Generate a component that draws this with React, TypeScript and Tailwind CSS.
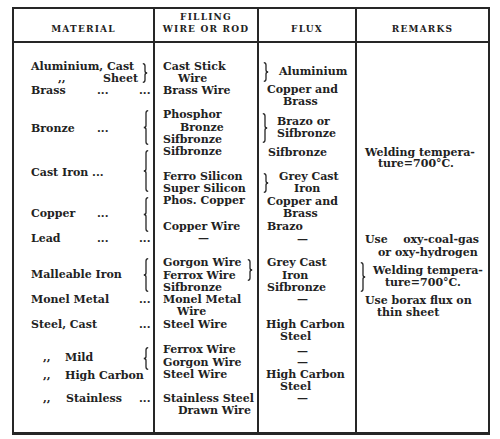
import React from "react";

function Brace({ h, dir }: { h: number; dir: "l" | "r" }) {
  const m = h / 2;
  const d =
    dir === "r"
      ? `M0.8 0.7 Q3 0.7 3 3 L3 ${m - 2} Q3 ${m} 5.2 ${m} Q3 ${m} 3 ${m + 2} L3 ${h - 3} Q3 ${h - 0.7} 0.8 ${h - 0.7}`
      : `M5.2 0.7 Q3 0.7 3 3 L3 ${m - 2} Q3 ${m} 0.8 ${m} Q3 ${m} 3 ${m + 2} L3 ${h - 3} Q3 ${h - 0.7} 5.2 ${h - 0.7}`;
  return (
    <svg width={6} height={h} viewBox={`0 0 6 ${h}`} className="shrink-0">
      <path d={d} fill="none" stroke="#262626" strokeWidth={1.3} />
    </svg>
  );
}

export default function App() {
  return (
    <div className="w-[500px] h-[439px] bg-white pt-[7px] pl-[12px] font-['DejaVu_Serif',serif] font-bold text-[11px] leading-[12px] text-[#222] overflow-hidden">
      <div className="w-[478px] h-[428px] border-2 border-b-[3px] border-[#262626] flex flex-col">
        {/* Header */}
        <div className="flex h-[34px] shrink-0 border-b-2 border-[#262626] text-[9px] tracking-[1.2px]">
          <div className="w-[139px] flex flex-col items-center justify-end pb-[6px]">
            <div>MATERIAL</div>
          </div>
          <div className="w-[104px] border-l-2 border-[#262626] flex flex-col items-center justify-end pb-[6px]">
            <div>FILLING</div>
            <div>WIRE OR ROD</div>
          </div>
          <div className="w-[98px] border-l-2 border-[#262626] flex flex-col items-center justify-end pb-[6px]">
            <div>FLUX</div>
          </div>
          <div className="w-[133px] border-l-2 border-[#262626] flex flex-col items-center justify-end pb-[6px]">
            <div>REMARKS</div>
          </div>
        </div>

        {/* Body */}
        <div className="flex flex-1">
          {/* Material */}
          <div className="w-[139px] flex flex-col pl-[17px]">
            <div className="mt-[18px] h-[24px] flex items-center">
              <div className="flex-1 flex flex-col">
                <div className="whitespace-nowrap">Aluminium, Cast</div>
                <div className="flex justify-between">
                  <span className="pl-[27px]">,,</span>
                  <span>Sheet</span>
                </div>
              </div>
              <div className="w-[15px] flex justify-center pr-[2px]">
                <Brace h={20} dir="r" />
              </div>
            </div>
            <div className="h-[12px] flex">
              <div className="flex-1 flex">
                <span className="w-[66px]">Brass</span>
                <span>...</span>
              </div>
              <div className="w-[15px] pl-[1px]">...</div>
            </div>
            <div className="mt-[12px] h-[36px] flex items-center">
              <div className="flex-1 flex pt-[4px]">
                <span className="w-[66px]">Bronze</span>
                <span>...</span>
              </div>
              <div className="w-[15px] flex justify-center">
                <Brace h={35} dir="l" />
              </div>
            </div>
            <div className="mt-[5px] h-[42px] flex items-center">
              <div className="flex-1 pt-[4px] whitespace-nowrap">Cast Iron ...</div>
              <div className="w-[15px] flex justify-center">
                <Brace h={42} dir="l" />
              </div>
            </div>
            <div className="mt-[4px] h-[36px] flex items-center">
              <div className="flex-1 flex">
                <span className="w-[66px]">Copper</span>
                <span>...</span>
              </div>
              <div className="w-[15px] flex justify-center">
                <Brace h={35} dir="l" />
              </div>
            </div>
            <div className="mt-[1px] h-[12px] flex">
              <div className="flex-1 flex">
                <span className="w-[66px]">Lead</span>
                <span>...</span>
              </div>
              <div className="w-[15px] pl-[1px]">...</div>
            </div>
            <div className="mt-[13px] h-[34px] flex items-center">
              <div className="flex-1 whitespace-nowrap">Malleable Iron</div>
              <div className="w-[15px] flex justify-center">
                <Brace h={34} dir="l" />
              </div>
            </div>
            <div className="mt-[2px] h-[12px] flex">
              <div className="flex-1 whitespace-nowrap">Monel Metal</div>
              <div className="w-[15px] pl-[1px]">...</div>
            </div>
            <div className="mt-[13px] h-[12px] flex">
              <div className="flex-1 whitespace-nowrap">Steel, Cast</div>
              <div className="w-[15px] pl-[1px]">...</div>
            </div>
            <div className="mt-[15px] h-[24px] flex items-center">
              <div className="flex-1 flex">
                <span className="w-[34px] pl-[12px]">,,</span>
                <span>Mild</span>
              </div>
              <div className="w-[15px] flex justify-center">
                <Brace h={23} dir="l" />
              </div>
            </div>
            <div className="h-[12px] flex">
              <div className="flex-1 flex whitespace-nowrap">
                <span className="w-[34px] pl-[12px]">,,</span>
                <span>High Carbon</span>
              </div>
              <div className="w-[15px]"></div>
            </div>
            <div className="mt-[11px] h-[12px] flex">
              <div className="flex-1 flex">
                <span className="w-[35px] pl-[12px]">,,</span>
                <span>Stainless</span>
              </div>
              <div className="w-[15px] pl-[1px]">...</div>
            </div>
          </div>

          {/* Filling */}
          <div className="w-[104px] border-l-2 border-[#262626] flex flex-col pl-[8px] whitespace-nowrap">
            <div className="mt-[18px]">Cast Stick</div>
            <div className="pl-[15px]">Wire</div>
            <div>Brass Wire</div>
            <div className="mt-[12px]">Phosphor</div>
            <div className="mt-[1px] pl-[17px]">Bronze</div>
            <div>Sifbronze</div>
            <div>Sifbronze</div>
            <div className="mt-[13px]">Ferro Silicon</div>
            <div>Super Silicon</div>
            <div>Phos. Copper</div>
            <div className="mt-[14px]">Copper Wire</div>
            <div className="pl-[35px]">—</div>
            <div className="mt-[12px] flex items-center justify-between pr-[4px]">
              <div className="flex flex-col">
                <div>Gorgon Wire</div>
                <div className="mt-[1px]">Ferrox Wire</div>
              </div>
              <Brace h={22} dir="r" />
            </div>
            <div>Sifbronze</div>
            <div>Monel Metal</div>
            <div className="pl-[14px]">Wire</div>
            <div className="mt-[1px]">Steel Wire</div>
            <div className="mt-[13px]">Ferrox Wire</div>
            <div className="mt-[1px]">Gorgon Wire</div>
            <div>Steel Wire</div>
            <div className="mt-[12px]">Stainless Steel</div>
            <div className="pl-[15px]">Drawn Wire</div>
          </div>

          {/* Flux */}
          <div className="w-[98px] border-l-2 border-[#262626] flex flex-col whitespace-nowrap">
            <div className="mt-[19px] h-[20px] flex items-center pl-[4px]">
              <Brace h={20} dir="r" />
              <span className="ml-[10px]">Aluminium</span>
            </div>
            <div className="mt-[2px] pl-[8px]">Copper and</div>
            <div className="pl-[24px]">Brass</div>
            <div className="mt-[5px] h-[30px] flex items-center pl-[3px]">
              <Brace h={30} dir="r" />
              <div className="ml-[9px] flex flex-col">
                <div>Brazo or</div>
                <div>Sifbronze</div>
              </div>
            </div>
            <div className="mt-[4px] pl-[9px]">Sifbronze</div>
            <div className="mt-[12px] h-[24px] flex items-center pl-[4px]">
              <Brace h={20} dir="r" />
              <div className="ml-[10px] flex flex-col">
                <div>Grey Cast</div>
                <div className="pl-[15px]">Iron</div>
              </div>
            </div>
            <div className="mt-[1px] pl-[8px]">Copper and</div>
            <div className="pl-[24px]">Brass</div>
            <div className="mt-[1px] pl-[8px]">Brazo</div>
            <div className="mt-[1px] pl-[38px]">—</div>
            <div className="mt-[11px] pl-[8px]">Grey Cast</div>
            <div className="mt-[1px] pl-[23px]">Iron</div>
            <div className="pl-[8px]">Sifbronze</div>
            <div className="pl-[38px]">—</div>
            <div className="mt-[13px] pl-[7px]">High Carbon</div>
            <div className="pl-[21px]">Steel</div>
            <div className="mt-[3px] pl-[38px] leading-[11px]">—</div>
            <div className="pl-[38px] leading-[11px]">—</div>
            <div className="mt-[1px] pl-[7px]">High Carbon</div>
            <div className="pl-[21px] leading-[11px]">Steel</div>
            <div className="mt-[1px] pl-[38px]">—</div>
          </div>

          {/* Remarks */}
          <div className="w-[133px] border-l-2 border-[#262626] flex flex-col whitespace-nowrap">
            <div className="mt-[104px] pl-[8px] leading-[11px]">Welding tempera-</div>
            <div className="pl-[21px] leading-[11px]">ture=700°C.</div>
            <div className="mt-[65px] flex justify-between pl-[8px] pr-[9px]">
              <span>Use</span>
              <span>oxy-coal-gas</span>
            </div>
            <div className="mt-[1px] pl-[21px]">or oxy-hydrogen</div>
            <div className="mt-[3px] h-[30px] flex items-center pl-[3px]">
              <Brace h={30} dir="r" />
              <div className="ml-[7px] flex flex-col">
                <div>Welding tempera-</div>
                <div className="pl-[12px]">ture=700°C.</div>
              </div>
            </div>
            <div className="mt-[3px] pl-[8px]">Use borax flux on</div>
            <div className="pl-[20px]">thin sheet</div>
          </div>
        </div>
      </div>
    </div>
  );
}
